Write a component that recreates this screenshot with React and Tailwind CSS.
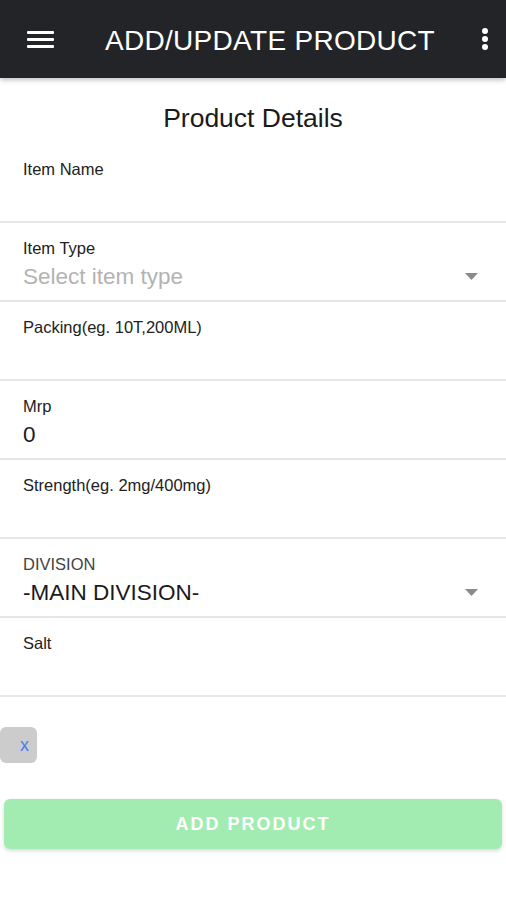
import React from "react";

function Field({ label, value, placeholder, select, upper }) {
  return (
    <div className="relative border-b-2 border-[#e6e6e6] px-[23px] pt-[15px] pb-[9px]">
      <div className={"text-[16.5px] leading-[20px] " + (upper ? "text-[#444]" : "text-[#222]")}>{label}</div>
      <div
        className={
          "mt-[5px] h-[28px] text-[22.5px] leading-[28px] " +
          (placeholder ? "text-[#b3b3b3]" : "text-[#1a1a1a]")
        }
      >
        {value}
      </div>
      {select && (
        <svg
          className="absolute right-[28px] top-[50px]"
          width="13"
          height="7"
          viewBox="0 0 13 7"
        >
          <path d="M0 0 L13 0 L6.5 7 Z" fill="#8a8a8a" />
        </svg>
      )}
    </div>
  );
}

export default function App() {
  return (
    <div
      className="w-[506px] h-[900px] bg-white overflow-hidden"
      style={{ fontFamily: '"Liberation Sans", Arial, sans-serif' }}
    >
      <div className="relative z-10 h-[78px] bg-[#232427] flex items-center shadow-[0_2px_5px_rgba(0,0,0,0.25)]">
        <div className="ml-[27px] flex flex-col gap-[4px] w-[27px]">
          <div className="h-[3px] bg-white rounded-[1px]" />
          <div className="h-[3px] bg-white rounded-[1px]" />
          <div className="h-[3px] bg-white rounded-[1px]" />
        </div>
        <div className="ml-[51px] text-white text-[28px] leading-[34px] tracking-[0.3px] mt-[3px]">
          ADD/UPDATE PRODUCT
        </div>
        <div className="ml-auto mr-[18px] flex flex-col gap-[2px] items-center">
          <div className="w-[6px] h-[6px] rounded-full bg-white" />
          <div className="w-[6px] h-[6px] rounded-full bg-white" />
          <div className="w-[6px] h-[6px] rounded-full bg-white" />
        </div>
      </div>
      <div className="h-[66px] pt-[25px] text-center text-[26.5px] leading-[30px] text-[#1a1a1a]">
        Product Details
      </div>
      <Field label="Item Name" value="" />
      <Field label="Item Type" value="Select item type" placeholder select />
      <Field label="Packing(eg. 10T,200ML)" value="" />
      <Field label="Mrp" value="0" />
      <Field label="Strength(eg. 2mg/400mg)" value="" />
      <Field label="DIVISION" value="-MAIN DIVISION-" select upper />
      <Field label="Salt" value="" />
      <div className="mt-[30px] w-[37px] h-[36px] bg-[#cccccc] rounded-[6px] flex items-center justify-end pr-[8px]">
        <span className="text-[18px] leading-[18px] text-[#4a7bec]">x</span>
      </div>
      <div className="mt-[36px] mx-[4px] h-[50px] rounded-[6px] bg-[#a3ecb1] shadow-[0_2px_4px_rgba(0,0,0,0.15)] flex items-center justify-center">
        <span className="text-white text-[18px] font-bold tracking-[2px]">ADD PRODUCT</span>
      </div>
    </div>
  );
}
